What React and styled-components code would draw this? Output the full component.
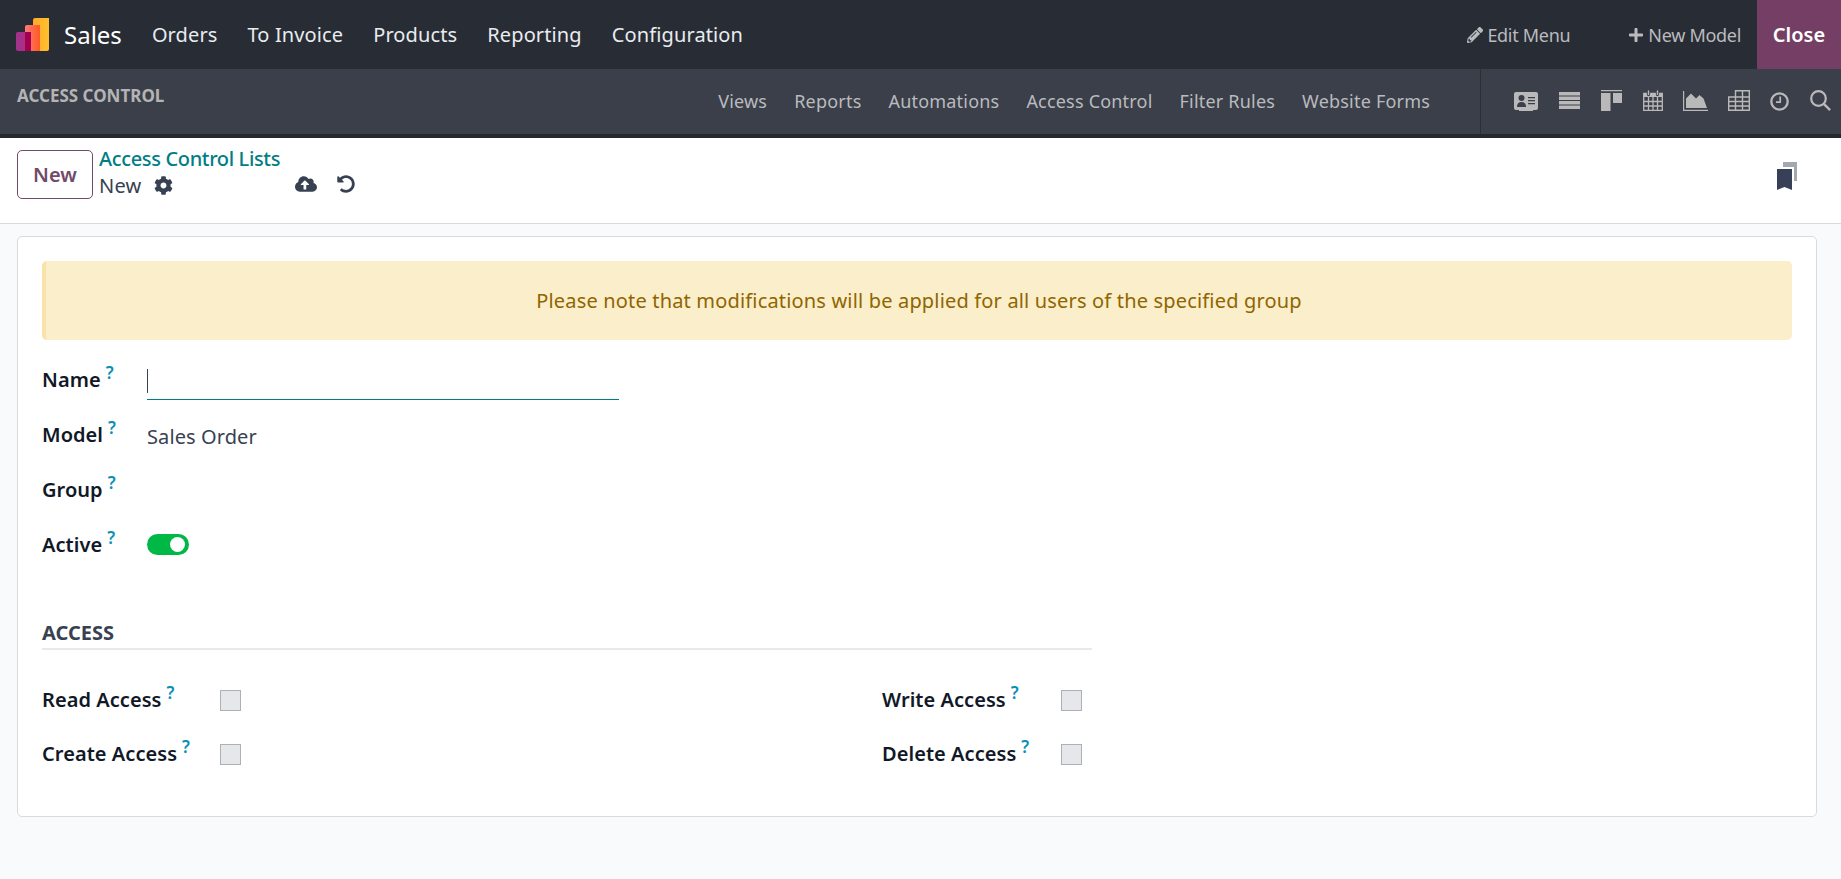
import React from "react";
import styled, { createGlobalStyle } from "styled-components";
import { FaPencilAlt, FaPlus, FaCog, FaCloudUploadAlt, FaUndoAlt } from "react-icons/fa";

const GlobalStyle = createGlobalStyle`
  html, body {
    margin: 0;
    height: 100%;
    background: #f9fafb;
    font-family: "Noto Sans", "Open Sans", sans-serif;
  }
  * {
    box-sizing: border-box;
  }
`;

const Page = styled.div`
  min-height: 879px;
  display: flex;
  flex-direction: column;
`;

const NavBar = styled.div`
  height: 69px;
  background: #282c35;
  display: flex;
  align-items: center;
  padding-left: 16px;
`;

const Brand = styled.div`
  display: flex;
  align-items: center;
  gap: 15px;
  font-size: 24px;
  color: #fff;
  margin-right: 30px;
`;

const NavLink = styled.a`
  font-size: 20px;
  letter-spacing: 0.12px;
  color: #e9ecef;
  margin-right: 30px;
`;

const NavRight = styled.div`
  margin-left: auto;
  display: flex;
  align-items: center;
  height: 100%;
`;

const NavAction = styled.a`
  display: flex;
  align-items: center;
  gap: 4px;
  font-size: 18px;
  letter-spacing: -0.3px;
  color: #b9bbbe;
  margin-right: ${(p) => p.$gap}px;
  svg {
    width: 16px;
    height: 16px;
  }
`;

const CloseButton = styled.a`
  width: 84px;
  height: 100%;
  background: #753e64;
  color: #fff;
  font-size: 20px;
  font-weight: 600;
  display: flex;
  align-items: center;
  justify-content: center;
`;

const SubBar = styled.div`
  height: 69px;
  background: #3b3f49;
  border-bottom: 4px solid #24272e;
  display: flex;
`;

const SubTitle = styled.div`
  font-size: 17px;
  font-weight: 700;
  color: #b4b4b4;
  padding: 15px 0 0 17px;
`;

const SubMenu = styled.div`
  margin-left: auto;
  display: flex;
  align-items: center;
  gap: 27px;
  margin-right: 50px;
  padding-bottom: 2px;
`;

const SubLink = styled.a`
  font-size: 18px;
  letter-spacing: 0.2px;
  color: #b9bbbe;
`;

const ViewIcons = styled.div`
  width: 361px;
  border-left: 1px solid #2c2f37;
  display: flex;
  align-items: center;
  padding-left: 33px;
  color: #b9b9b9;
`;

const ViewIcon = styled.svg`
  display: block;
  flex: none;
  margin-right: ${(p) => p.$gap}px;
  position: relative;
  top: ${(p) => p.$nudge || 0}px;
`;

const ControlPanel = styled.div`
  height: 86px;
  background: #fff;
  border-bottom: 1px solid #d8dadd;
  display: flex;
  align-items: flex-start;
  padding: 12px 44px 0 17px;
`;

const NewButton = styled.button`
  width: 76px;
  height: 49px;
  background: #fff;
  border: 1px solid #714b67;
  border-radius: 5px;
  color: #714b67;
  font: 600 20px "Noto Sans", sans-serif;
  margin-right: 6px;
  padding: 0;
`;

const Crumbs = styled.div`
  display: flex;
  flex-direction: column;
  width: 196px;
  margin-top: -4px;
`;

const CrumbLink = styled.a`
  font-size: 20px;
  font-weight: 500;
  letter-spacing: -0.35px;
  color: #017e84;
  line-height: 26px;
  white-space: nowrap;
`;

const CrumbCurrent = styled.div`
  display: flex;
  align-items: center;
  gap: 13px;
  font-size: 20px;
  line-height: 27px;
  letter-spacing: 0.2px;
  color: #374151;
  svg {
    width: 19px;
    height: 19px;
  }
`;

const SaveIcons = styled.div`
  display: flex;
  align-items: center;
  gap: 20px;
  height: 27px;
  margin-top: 20px;
  color: #374151;
`;

const Bookmarks = styled.svg`
  margin-left: auto;
  margin-top: 12px;
`;

const Content = styled.div`
  padding: 12px 24px 0 17px;
`;

const Card = styled.div`
  height: 581px;
  background: #fff;
  border: 1px solid #d8dadd;
  border-radius: 5px;
  padding: 24px 24px 0;
`;

const Alert = styled.div`
  height: 79px;
  background: #fbeeca;
  border-left: 4px solid #f8e3ab;
  border-radius: 5px;
  color: #8f6500;
  font-size: 20px;
  letter-spacing: 0.17px;
  display: flex;
  align-items: center;
  justify-content: center;
  margin-bottom: 26px;
`;

const FieldGrid = styled.div`
  display: grid;
  grid-template-columns: 105px 472px;
  grid-auto-rows: 55px;
`;

const Label = styled.div`
  font-size: 20px;
  font-weight: 600;
  letter-spacing: 0.05px;
  color: #111827;
  white-space: nowrap;
  padding-top: ${(p) => p.$top || 0}px;
`;

const Help = styled.sup`
  color: #0a8fb5;
  font-size: 17px;
  font-weight: 600;
  margin-left: 5px;
  line-height: 0;
`;

const NameInput = styled.div`
  height: 34px;
  border-bottom: 1px solid #017e84;
  position: relative;
  &::before {
    content: "";
    position: absolute;
    left: 0;
    top: 3px;
    width: 1px;
    height: 24px;
    background: #374151;
  }
`;

const Value = styled.div`
  font-size: 20px;
  letter-spacing: 0.1px;
  color: #374151;
  padding-top: 2px;
`;

const Toggle = styled.div`
  width: 42px;
  height: 21px;
  border-radius: 11px;
  background: #00b845;
  margin-top: 3px;
  position: relative;
  &::after {
    content: "";
    position: absolute;
    right: 4px;
    top: 3px;
    width: 15px;
    height: 15px;
    border-radius: 50%;
    background: #fff;
  }
`;

const SectionTitle = styled.div`
  width: 1050px;
  margin-top: 33px;
  padding-bottom: 2px;
  border-bottom: 2px solid #e7e9ed;
  font-size: 20px;
  font-weight: 700;
  color: #374151;
`;

const AccessGrid = styled.div`
  width: 1050px;
  margin-top: 35px;
  display: grid;
  grid-template-columns: 840px 1fr;
  grid-auto-rows: 54px;
`;

const AccessField = styled.div`
  display: grid;
  grid-template-columns: ${(p) => p.$label}px 21px;
  align-items: start;
`;

const CheckBox = styled.div`
  width: 21px;
  height: 21px;
  background: #e5e7eb;
  border: 1px solid #adb0b5;
  margin-top: 5px;
`;

const SalesLogo = () => (
  <svg width="33" height="33" viewBox="0 0 33 33">
    <defs>
      <linearGradient id="logoYellow" x1="0" x2="1" y1="0" y2="0">
        <stop offset="0" stopColor="#ffa928" />
        <stop offset="1" stopColor="#ffc12f" />
      </linearGradient>
      <linearGradient id="logoRed" x1="0" x2="1" y1="0" y2="0">
        <stop offset="0" stopColor="#ff7a7a" />
        <stop offset="1" stopColor="#ff5a22" />
      </linearGradient>
      <linearGradient id="logoPurple" x1="0" x2="1" y1="0" y2="0">
        <stop offset="0" stopColor="#a1318f" />
        <stop offset="1" stopColor="#b0307c" />
      </linearGradient>
    </defs>
    <path d="M17 2a2 2 0 0 1 2-2h14v31a2 2 0 0 1-2 2H17z" fill="url(#logoYellow)" />
    <path d="M9 9a2 2 0 0 1 2-2h13v26H9z" fill="url(#logoRed)" />
    <path d="M0 16a2 2 0 0 1 2-2h13v19H2a2 2 0 0 1-2-2z" fill="url(#logoPurple)" />
    <rect x="9" y="14" width="6" height="19" fill="#a3004f" />
  </svg>
);

const CardIcon = () => (
  <ViewIcon $gap={21} width="24" height="19" viewBox="0 0 24 19">
    <rect width="24" height="18" y="0" rx="2" fill="currentColor" />
    <rect x="5" y="18" width="14" height="1" fill="currentColor" />
    <circle cx="7.5" cy="6" r="3" fill="#3b3f49" />
    <path d="M3 15c0-3.5 1.5-5 4.500-5s4.500 1.500 4.500 5z" fill="#3b3f49" />
    <path d="M14 5h7v1.300h-7zM14 8h7v1.300h-7zM14 11h7v1.300h-7z" fill="#3b3f49" />
  </ViewIcon>
);

const ListIcon = () => (
  <ViewIcon $gap={21} width="21" height="17" viewBox="0 0 21 17" $nudge={-1}>
    <path d="M0 0h21v3.500H0zM0 4.500h21V8H0zM0 9h21v3.500H0zM0 13.500h21V17H0z" fill="currentColor" />
  </ViewIcon>
);

const KanbanIcon = () => (
  <ViewIcon $gap={21} width="21" height="21" viewBox="0 0 21 21" $nudge={-1}>
    <path d="M0 0h21v1.300H0zM0 3h9.500v18H0zM12 3h9v10h-9z" fill="currentColor" />
  </ViewIcon>
);

const CalendarIcon = () => (
  <ViewIcon $gap={20} width="20" height="21" viewBox="0 0 20 21" $nudge={-1}>
    <path
      d="M0.700 3.500h18.600v16.800H0.700zM0.700 11.500h18.600M0.700 16h18.600M5.500 7v13.300M10 7v13.300M14.500 7v13.300"
      fill="none"
      stroke="currentColor"
      strokeWidth="1.300"
    />
    <path d="M1 3h18v4H1z" fill="currentColor" />
    <path d="M5.500 1.200v3.400M14.500 1.200v3.400" stroke="#3b3f49" strokeWidth="3.200" strokeLinecap="round" />
    <path d="M5.500 1v3.400M14.500 1v3.400" stroke="currentColor" strokeWidth="1.400" strokeLinecap="round" />
  </ViewIcon>
);

const AreaIcon = () => (
  <ViewIcon $gap={20} width="25" height="20" viewBox="0 0 25 20" $nudge={-1}>
    <path d="M0 0h1.200v18.800H25V20H0z" fill="currentColor" />
    <path d="M3 17V7.500L8 2.500l5 5 3.500-3.500 4 3.500 3.500 9.500z" fill="currentColor" />
  </ViewIcon>
);

const TableIcon = () => (
  <ViewIcon $gap={20} width="22" height="21" viewBox="0 0 22 21" $nudge={-1}>
    <path
      d="M0.700 7h20.600v13.300H0.700zM7.500 0.700h13.800v6.300H7.500zM0.700 11.500h20.600M0.700 16h20.600M7.500 7v13.300M14.500 0.700v19.600"
      fill="none"
      stroke="currentColor"
      strokeWidth="1.400"
    />
  </ViewIcon>
);

const ClockIcon = () => (
  <ViewIcon $gap={21} width="19" height="19" viewBox="0 0 19 19">
    <circle cx="9.500" cy="9.500" r="8.200" fill="none" stroke="currentColor" strokeWidth="2.300" />
    <path d="M10.200 4.500v5.700H6" fill="none" stroke="currentColor" strokeWidth="1.700" />
  </ViewIcon>
);

const SearchIcon = () => (
  <ViewIcon $gap={0} width="21" height="21" viewBox="0 0 21 21" $nudge={-1}>
    <circle cx="8.500" cy="8.500" r="7.300" fill="none" stroke="currentColor" strokeWidth="2.200" />
    <path d="M13.800 13.800l6.300 6.300" stroke="currentColor" strokeWidth="2.400" />
  </ViewIcon>
);

const navItems = ["Orders", "To Invoice", "Products", "Reporting", "Configuration"];
const subItems = ["Views", "Reports", "Automations", "Access Control", "Filter Rules", "Website Forms"];

const App = () => {
  return (
    <Page>
      <GlobalStyle />
      <NavBar>
        <Brand>
          <SalesLogo />
          Sales
        </Brand>
        {navItems.map((item) => (
          <NavLink key={item}>{item}</NavLink>
        ))}
        <NavRight>
          <NavAction $gap={58}>
            <FaPencilAlt />
            Edit Menu
          </NavAction>
          <NavAction $gap={16}>
            <FaPlus />
            New Model
          </NavAction>
          <CloseButton>Close</CloseButton>
        </NavRight>
      </NavBar>

      <SubBar>
        <SubTitle>ACCESS CONTROL</SubTitle>
        <SubMenu>
          {subItems.map((item) => (
            <SubLink key={item}>{item}</SubLink>
          ))}
        </SubMenu>
        <ViewIcons>
          <CardIcon />
          <ListIcon />
          <KanbanIcon />
          <CalendarIcon />
          <AreaIcon />
          <TableIcon />
          <ClockIcon />
          <SearchIcon />
        </ViewIcons>
      </SubBar>

      <ControlPanel>
        <NewButton>New</NewButton>
        <Crumbs>
          <CrumbLink>Access Control Lists</CrumbLink>
          <CrumbCurrent>
            New
            <FaCog />
          </CrumbCurrent>
        </Crumbs>
        <SaveIcons>
          <FaCloudUploadAlt size={22} />
          <FaUndoAlt size={18} />
        </SaveIcons>
        <Bookmarks width="20" height="28" viewBox="0 0 20 28">
          <path d="M6 0h14v19h-3V5H6z" fill="#a4a8b0" />
          <path d="M0 7h15v21l-7.500-3L0 28z" fill="#374056" />
        </Bookmarks>
      </ControlPanel>

      <Content>
        <Card>
          <Alert>Please note that modifications will be applied for all users of the specified group</Alert>
          <FieldGrid>
            <Label>
              Name<Help>?</Help>
            </Label>
            <NameInput />
            <Label>
              Model<Help>?</Help>
            </Label>
            <Value>Sales Order</Value>
            <Label>
              Group<Help>?</Help>
            </Label>
            <div />
            <Label>
              Active<Help>?</Help>
            </Label>
            <Toggle />
          </FieldGrid>
          <SectionTitle>ACCESS</SectionTitle>
          <AccessGrid>
            <AccessField $label={178}>
              <Label $top={1}>
                Read Access<Help>?</Help>
              </Label>
              <CheckBox />
            </AccessField>
            <AccessField $label={179}>
              <Label $top={1}>
                Write Access<Help>?</Help>
              </Label>
              <CheckBox />
            </AccessField>
            <AccessField $label={178}>
              <Label $top={1}>
                Create Access<Help>?</Help>
              </Label>
              <CheckBox />
            </AccessField>
            <AccessField $label={179}>
              <Label $top={1}>
                Delete Access<Help>?</Help>
              </Label>
              <CheckBox />
            </AccessField>
          </AccessGrid>
        </Card>
      </Content>
    </Page>
  );
};

export default App;
